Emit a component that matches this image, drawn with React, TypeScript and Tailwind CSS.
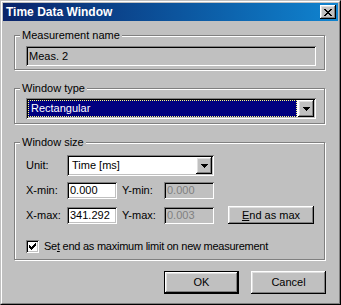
import type { ReactNode } from "react";

const raised =
  "shadow-[inset_-1px_-1px_0_#000,inset_1px_1px_0_#fff,inset_-2px_-2px_0_#808080,inset_2px_2px_0_#dfdfdf]";
const sunken =
  "shadow-[inset_1px_1px_0_#808080,inset_-1px_-1px_0_#fff,inset_2px_2px_0_#000,inset_-2px_-2px_0_#c0c0c0]";

function Group({ label, className, children }: { label: string; className: string; children: ReactNode }) {
  return (
    <div className={`relative border border-[#808080] shadow-[inset_1px_1px_0_#fff,1px_1px_0_#fff] ${className}`}>
      <span className="absolute left-[5px] top-[-7px] bg-[#c0c0c0] px-[2px]">{label}</span>
      {children}
    </div>
  );
}

function Arrow() {
  return (
    <svg width="7" height="4" viewBox="0 0 7 4" shapeRendering="crispEdges">
      <path d="M0 0h7v1H0zM1 1h5v1H1zM2 2h3v1H2zM3 3h1v1H3z" fill="#000" />
    </svg>
  );
}

function Combo({ text, selected, className }: { text: string; selected?: boolean; className: string }) {
  return (
    <div className={`flex h-[21px] bg-white p-[2px] ${sunken} ${className}`}>
      {selected ? (
        <div className="flex flex-1 items-center pr-px">
          <div className="flex h-full flex-1 items-center border border-dotted border-[#ffff80] bg-[#000080] pl-[2px] text-white">
            {text}
          </div>
        </div>
      ) : (
        <div className="flex flex-1 items-center pl-[3px]">{text}</div>
      )}
      <div className={`flex w-[16px] items-center justify-center bg-[#c0c0c0] ${raised}`}>
        <Arrow />
      </div>
    </div>
  );
}

function Field({ value, disabled, className }: { value: string; disabled?: boolean; className: string }) {
  return (
    <div
      className={`flex items-center pl-[3px] ${sunken} ${
        disabled ? "bg-[#c0c0c0] text-[#808080]" : "bg-white"
      } ${className}`}
    >
      {value}
    </div>
  );
}

function Button({ children, isDefault, className }: { children: ReactNode; isDefault?: boolean; className: string }) {
  const inner = (
    <div className={`flex h-full w-full items-center justify-center bg-[#c0c0c0] ${raised}`}>{children}</div>
  );
  return isDefault ? (
    <div className={`border border-black ${className}`}>{inner}</div>
  ) : (
    <div className={className}>{inner}</div>
  );
}

export default function App() {
  return (
    <div className="h-[305px] w-[341px] border border-b-black border-l-[#c0c0c0] border-r-black border-t-[#c0c0c0] bg-[#c0c0c0] font-['Liberation_Sans',Arial,sans-serif] text-[11px] leading-[13px] text-black">
      <div className="flex h-full flex-col border border-b-[#808080] border-l-white border-r-[#808080] border-t-white p-px">
        <div className="flex h-[18px] items-center bg-gradient-to-r from-[#0a246a] to-[#1084d0] pl-[3px] pr-[2px]">
          <span className="flex-1 text-[12px] font-bold leading-[14px] text-white">Time Data Window</span>
          <div className={`flex h-[14px] w-[16px] items-center justify-center bg-[#c0c0c0] ${raised}`}>
            <svg width="8" height="7" viewBox="0 0 8 7" shapeRendering="crispEdges">
              <path
                d="M0 0h2v1H0zM6 0h2v1H6zM1 1h2v1H1zM5 1h2v1H5zM2 2h4v1H2zM3 3h2v1H3zM2 4h4v1H2zM1 5h2v1H1zM5 5h2v1H5zM0 6h2v1H0zM6 6h2v1H6z"
                fill="#000"
              />
            </svg>
          </div>
        </div>

        <div className="flex flex-1 flex-col pl-[11px] pr-[13px] pt-[14px]">
          <Group label="Measurement name" className="h-[35px] pl-[11px] pr-[8px] pt-[10px]">
            <Field value="Meas. 2" disabled className="h-[20px] !text-black" />
          </Group>

          <Group label="Window type" className="mt-[18px] h-[36px] pl-[11px] pr-[8px] pt-[9px]">
            <Combo text="Rectangular" selected className="w-full" />
          </Group>

          <Group label="Window size" className="mt-[18px] h-[118px] pl-[11px] pt-[12px]">
            <div className="flex items-center">
              <span className="w-[41px]">Unit:</span>
              <Combo text="Time [ms]" className="w-[147px]" />
            </div>
            <div className="mt-[6px] flex items-center">
              <span className="w-[41px]">X-min:</span>
              <Field value="0.000" className="h-[17px] w-[50px]" />
              <span className="ml-[5px] w-[42px]">Y-min:</span>
              <Field value="0.000" disabled className="h-[17px] w-[50px]" />
            </div>
            <div className="mt-[7px] flex items-center">
              <span className="w-[41px]">X-max:</span>
              <Field value="341.292" className="h-[17px] w-[50px]" />
              <span className="ml-[5px] w-[42px]">Y-max:</span>
              <Field value="0.003" disabled className="h-[17px] w-[50px]" />
              <Button className="ml-[14px] h-[18px] w-[86px]">
                <span>
                  <span className="underline">E</span>nd as max
                </span>
              </Button>
            </div>
            <div className="mt-[16px] flex items-center">
              <div className={`flex h-[13px] w-[13px] items-center justify-center bg-white ${sunken}`}>
                <svg width="7" height="7" viewBox="0 0 7 7" shapeRendering="crispEdges">
                  <path
                    d="M6 0h1v3H6zM5 1h1v3H5zM0 2h1v3H0zM4 2h1v3H4zM1 3h1v3H1zM3 3h1v3H3zM2 4h1v3H2z"
                    fill="#000"
                  />
                </svg>
              </div>
              <span className="ml-[5px] tracking-[-0.25px]">
                Se<span className="underline">t</span> end as maximum limit on new measurement
              </span>
            </div>
          </Group>

          <div className="-mr-px mt-[11px] flex justify-end gap-[12px]">
            <Button isDefault className="h-[23px] w-[75px]">
              OK
            </Button>
            <Button className="h-[23px] w-[75px]">Cancel</Button>
          </div>
        </div>
      </div>
    </div>
  );
}
